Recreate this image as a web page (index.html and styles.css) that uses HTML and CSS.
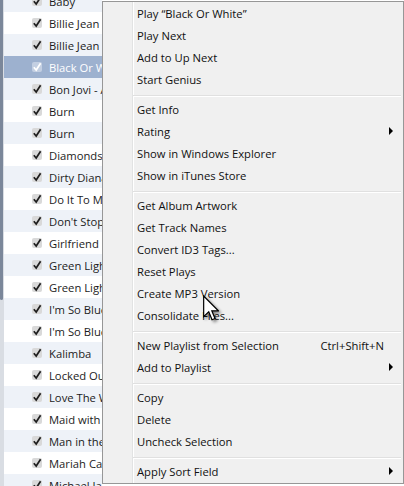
FILE: index.html
```html
<!DOCTYPE html>
<html>
<head>
<meta charset="utf-8">
<link rel="stylesheet" href="styles.css">
</head>
<body>
<div class="screen">
  <div class="edge"><div class="thumb"></div></div>
  <div class="rows">
    <div class="row alt"><span class="cb"><svg viewBox="0 0 10 10"><path d="M1.8 5.2 L4.2 8 L8.6 1.2"/></svg></span><span class="name">Baby</span></div>
    <div class="row"><span class="cb"><svg viewBox="0 0 10 10"><path d="M1.8 5.2 L4.2 8 L8.6 1.2"/></svg></span><span class="name">Billie Jean</span></div>
    <div class="row alt"><span class="cb"><svg viewBox="0 0 10 10"><path d="M1.8 5.2 L4.2 8 L8.6 1.2"/></svg></span><span class="name">Billie Jean</span></div>
    <div class="row selected"><span class="cb"><svg viewBox="0 0 10 10"><path d="M1.8 5.2 L4.2 8 L8.6 1.2"/></svg></span><span class="name">Black Or White</span></div>
    <div class="row alt"><span class="cb"><svg viewBox="0 0 10 10"><path d="M1.8 5.2 L4.2 8 L8.6 1.2"/></svg></span><span class="name">Bon Jovi - Always</span></div>
    <div class="row"><span class="cb"><svg viewBox="0 0 10 10"><path d="M1.8 5.2 L4.2 8 L8.6 1.2"/></svg></span><span class="name">Burn</span></div>
    <div class="row alt"><span class="cb"><svg viewBox="0 0 10 10"><path d="M1.8 5.2 L4.2 8 L8.6 1.2"/></svg></span><span class="name">Burn</span></div>
    <div class="row"><span class="cb"><svg viewBox="0 0 10 10"><path d="M1.8 5.2 L4.2 8 L8.6 1.2"/></svg></span><span class="name">Diamonds</span></div>
    <div class="row alt"><span class="cb"><svg viewBox="0 0 10 10"><path d="M1.8 5.2 L4.2 8 L8.6 1.2"/></svg></span><span class="name">Dirty Diana</span></div>
    <div class="row"><span class="cb"><svg viewBox="0 0 10 10"><path d="M1.8 5.2 L4.2 8 L8.6 1.2"/></svg></span><span class="name">Do It To Me</span></div>
    <div class="row alt"><span class="cb"><svg viewBox="0 0 10 10"><path d="M1.8 5.2 L4.2 8 L8.6 1.2"/></svg></span><span class="name">Don't Stop</span></div>
    <div class="row"><span class="cb"><svg viewBox="0 0 10 10"><path d="M1.8 5.2 L4.2 8 L8.6 1.2"/></svg></span><span class="name">Girlfriend</span></div>
    <div class="row alt"><span class="cb"><svg viewBox="0 0 10 10"><path d="M1.8 5.2 L4.2 8 L8.6 1.2"/></svg></span><span class="name">Green Light</span></div>
    <div class="row"><span class="cb"><svg viewBox="0 0 10 10"><path d="M1.8 5.2 L4.2 8 L8.6 1.2"/></svg></span><span class="name">Green Light</span></div>
    <div class="row alt"><span class="cb"><svg viewBox="0 0 10 10"><path d="M1.8 5.2 L4.2 8 L8.6 1.2"/></svg></span><span class="name">I'm So Blue</span></div>
    <div class="row"><span class="cb"><svg viewBox="0 0 10 10"><path d="M1.8 5.2 L4.2 8 L8.6 1.2"/></svg></span><span class="name">I'm So Blue</span></div>
    <div class="row alt"><span class="cb"><svg viewBox="0 0 10 10"><path d="M1.8 5.2 L4.2 8 L8.6 1.2"/></svg></span><span class="name">Kalimba</span></div>
    <div class="row"><span class="cb"><svg viewBox="0 0 10 10"><path d="M1.8 5.2 L4.2 8 L8.6 1.2"/></svg></span><span class="name">Locked Out</span></div>
    <div class="row alt"><span class="cb"><svg viewBox="0 0 10 10"><path d="M1.8 5.2 L4.2 8 L8.6 1.2"/></svg></span><span class="name">Love The Way</span></div>
    <div class="row"><span class="cb"><svg viewBox="0 0 10 10"><path d="M1.8 5.2 L4.2 8 L8.6 1.2"/></svg></span><span class="name">Maid with the Flaxen Hair</span></div>
    <div class="row alt"><span class="cb"><svg viewBox="0 0 10 10"><path d="M1.8 5.2 L4.2 8 L8.6 1.2"/></svg></span><span class="name">Man in the Mirror</span></div>
    <div class="row"><span class="cb"><svg viewBox="0 0 10 10"><path d="M1.8 5.2 L4.2 8 L8.6 1.2"/></svg></span><span class="name">Mariah Carey</span></div>
    <div class="row alt"><span class="cb"><svg viewBox="0 0 10 10"><path d="M1.8 5.2 L4.2 8 L8.6 1.2"/></svg></span><span class="name">Michael Jackson</span></div>
  </div>

  <div class="menu">
    <div class="item">Play “Black Or White”</div>
    <div class="item">Play Next</div>
    <div class="item">Add to Up Next</div>
    <div class="item">Start Genius</div>
    <div class="sep"></div>
    <div class="item">Get Info</div>
    <div class="item">Rating<span class="arrow"></span></div>
    <div class="item">Show in Windows Explorer</div>
    <div class="item">Show in iTunes Store</div>
    <div class="sep"></div>
    <div class="item">Get Album Artwork</div>
    <div class="item">Get Track Names</div>
    <div class="item">Convert ID3 Tags...</div>
    <div class="item">Reset Plays</div>
    <div class="item">Create MP3 Version</div>
    <div class="item">Consolidate Files...</div>
    <div class="sep"></div>
    <div class="item">New Playlist from Selection<span class="shortcut">Ctrl+Shift+N</span></div>
    <div class="item">Add to Playlist<span class="arrow"></span></div>
    <div class="sep"></div>
    <div class="item">Copy</div>
    <div class="item">Delete</div>
    <div class="item">Uncheck Selection</div>
    <div class="sep"></div>
    <div class="item">Apply Sort Field<span class="arrow"></span></div>
  </div>

  <svg class="cursor" viewBox="0 0 12 19" width="16" height="26">
    <path d="M0.5 0.5 L0.5 16 L4.3 12.3 L6.8 18.3 L9 17.4 L6.6 11.6 L11.5 11.6 Z" fill="#fff" stroke="#000" stroke-width="0.9" stroke-linejoin="miter"/>
  </svg>
</div>
</body>
</html>
```

FILE: styles.css
```css
html, body {
  margin: 0;
  padding: 0;
}

body {
  width: 404px;
  height: 486px;
  overflow: hidden;
  background: #ffffff;
  font-family: "Open Sans", "Noto Sans", sans-serif;
  font-size: 11.25px;
  color: #111111;
}

.screen {
  position: relative;
  display: flex;
  width: 404px;
  height: 486px;
  overflow: hidden;
}

.edge {
  width: 4px;
  flex: none;
  background: #d9dde3;
}

.thumb {
  width: 3px;
  height: 300px;
  background: #7b879a;
  border-radius: 0 0 2px 2px;
}

.rows {
  width: 98px;
  flex: none;
  overflow: hidden;
  margin-top: -10px;
}

.row {
  height: 22px;
  display: flex;
  align-items: center;
  padding-left: 28px;
  background: #ffffff;
  color: #1c1c1c;
  white-space: nowrap;
}

.row.alt {
  background: #eef2f8;
}

.row.selected {
  background: #9db1cf;
  color: #ffffff;
}

.cb {
  width: 10px;
  height: 10px;
  flex: none;
  background: #d9d9d9;
  border-radius: 2px;
  display: flex;
  margin-right: 7px;
}

.cb svg {
  width: 10px;
  height: 10px;
  overflow: visible;
}

.cb path {
  fill: none;
  stroke: #1e1e1e;
  stroke-width: 1.7;
}

.row.selected .cb {
  background: #c3cfe2;
}

.row.selected .cb path {
  stroke: #ffffff;
}

.menu {
  position: absolute;
  left: 102px;
  top: 1px;
  width: 302px;
  box-sizing: border-box;
  border: 1px solid #979797;
  padding-bottom: 1px;
  background:
    linear-gradient(to right, transparent 29px, #e2e3e3 29px, #e2e3e3 30px, #ffffff 30px, #ffffff 31px, transparent 31px),
    #f0f0f0;
  color: #111111;
}

.item {
  height: 22px;
  display: flex;
  align-items: center;
  padding-left: 34px;
  padding-right: 10px;
  white-space: nowrap;
}

.shortcut {
  margin-left: auto;
  margin-right: 9px;
}

.arrow {
  margin-left: auto;
  width: 0;
  height: 0;
  border-left: 4px solid #000;
  border-top: 4px solid transparent;
  border-bottom: 4px solid transparent;
}

.sep {
  height: 8px;
  box-sizing: border-box;
  padding-top: 5px;
  padding-left: 30px;
  padding-right: 2px;
}

.sep::before {
  content: "";
  display: block;
  border-top: 1px solid #e0e0e0;
  border-bottom: 1px solid #ffffff;
}

.cursor {
  position: absolute;
  left: 203px;
  top: 295px;
  filter: drop-shadow(2px 2px 1.5px rgba(0, 0, 0, 0.45));
}
```
